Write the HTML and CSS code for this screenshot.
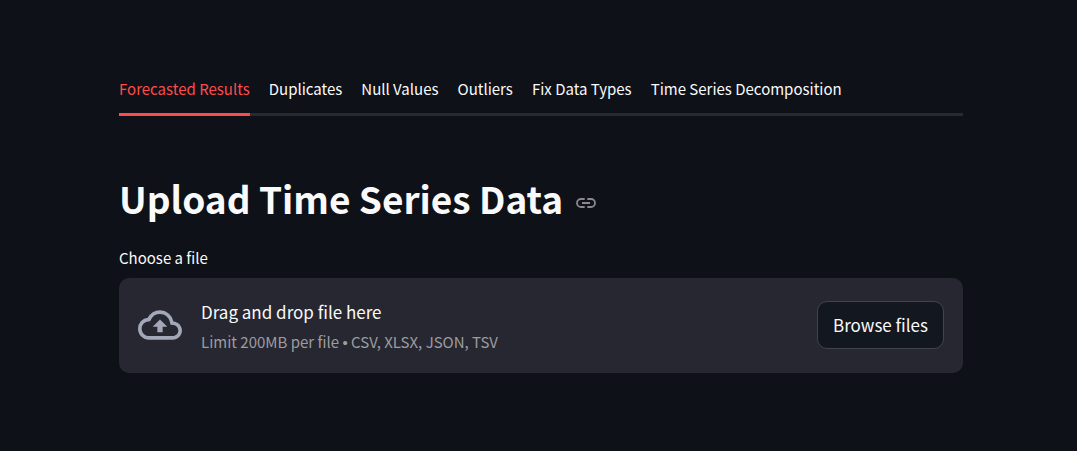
FILE: index.html
```html
<!DOCTYPE html>
<html lang="en">
<head>
<meta charset="utf-8">
<title>Upload Time Series Data</title>
<meta name="viewport" content="width=device-width, initial-scale=1">
<link rel="stylesheet" href="styles.css">
</head>
<body>
<main class="page">
  <div class="tabs" role="tablist">
    <button class="tab tab-active" role="tab" aria-selected="true">Forecasted Results</button>
    <button class="tab" role="tab" aria-selected="false">Duplicates</button>
    <button class="tab" role="tab" aria-selected="false">Null Values</button>
    <button class="tab" role="tab" aria-selected="false">Outliers</button>
    <button class="tab" role="tab" aria-selected="false">Fix Data Types</button>
    <button class="tab" role="tab" aria-selected="false">Time Series Decomposition</button>
  </div>
  <header class="heading" id="upload">
    <h1 class="title">Upload Time Series Data</h1>
    <a class="anchor" href="#upload" aria-label="Link to heading">
      <svg class="anchor-icon" viewBox="0 0 20 10" fill="none" stroke="currentColor" stroke-width="1.8">
        <path d="M8.7 1H5a4 4 0 0 0 0 8h3.700M11.300 1H15a4 4 0 0 1 0 8h-3.700M6 5h8"/>
      </svg>
    </a>
  </header>
  <section class="uploader">
    <span class="label" id="file-label">Choose a file</span>
    <div class="dropzone" role="group" aria-labelledby="file-label">
      <svg class="cloud" viewBox="0 0 24 16" fill="currentColor" aria-hidden="true">
        <path d="M19.35 6.04A7.49 7.49 0 0 0 12 0C9.11 0 6.6 1.64 5.35 4.04A5.994 5.994 0 0 0 0 10c0 3.31 2.69 6 6 6h13c2.76 0 5-2.24 5-5 0-2.64-2.05-4.78-4.65-4.96zM19 14H6c-2.21 0-4-1.79-4-4 0-2.05 1.53-3.76 3.56-3.97l1.07-.11.5-.95A5.469 5.469 0 0 1 12 2c2.62 0 4.88 1.86 5.39 4.43l.3 1.5 1.53.11A2.98 2.98 0 0 1 22 11c0 1.65-1.35 3-3 3zM8 9h2.55v3h2.9V9H16l-4-4z"/>
      </svg>
      <div class="hint">
        <span class="hint-main">Drag and drop file here</span>
        <span class="hint-limit">Limit 200MB per file <span class="dot">•</span> CSV, XLSX, JSON, TSV</span>
      </div>
      <button class="browse" type="button">Browse files</button>
    </div>
  </section>
</main>
</body>
</html>
```
FILE: styles.css
```css
* {
  box-sizing: border-box;
}

body {
  margin: 0;
  background: #0e1117;
  color: #fafafa;
  font-family: "Noto Sans CJK SC", "Noto Sans", sans-serif;
}

button {
  font: inherit;
  color: inherit;
  cursor: pointer;
}

.page {
  padding: 68px 114px 68px 119px;
}

.tabs {
  display: flex;
  gap: 19px;
  box-shadow: inset 0 -3px #292a2e;
}

.tab {
  height: 48px;
  padding: 0 0 4px;
  border: 0;
  border-bottom: 3px solid transparent;
  background: none;
  font-size: 15px;
  line-height: 24px;
  white-space: nowrap;
}

.tab-active {
  border-bottom-color: #ff4b4b;
  color: #ff4b4b;
}

.heading {
  display: flex;
  align-items: center;
  gap: 13px;
  margin-top: 54px;
}

.title {
  margin: 0;
  font-size: 37px;
  font-weight: 700;
  line-height: 56px;
}

.anchor {
  display: flex;
  padding-top: 10px;
  color: #87898d;
}

.anchor-icon {
  width: 20px;
  height: 10px;
}

.uploader {
  display: flex;
  flex-direction: column;
  gap: 8px;
  margin-top: 20px;
}

.label {
  font-size: 15px;
  line-height: 24px;
}

.dropzone {
  display: flex;
  align-items: center;
  min-height: 95px;
  padding: 16px 19px 17px;
  border-radius: 10px;
  background: #262730;
}

.cloud {
  flex: none;
  width: 44px;
  height: 30px;
  margin-right: 19px;
  color: #a3a8b8;
}

.hint {
  display: flex;
  flex: 1;
  flex-direction: column;
  gap: 4px;
  padding-top: 2px;
}

.hint-main {
  font-size: 17px;
  line-height: 28px;
}

.hint-limit {
  color: #9c9da1;
  font-size: 15px;
  line-height: 24px;
}

.dot {
  font-family: "Liberation Sans", sans-serif;
  line-height: 1;
}

.browse {
  height: 48px;
  padding: 0 15px 2px;
  border: 1px solid #41444c;
  border-radius: 10px;
  background: #131720;
  font-size: 17px;
  white-space: nowrap;
}
```
